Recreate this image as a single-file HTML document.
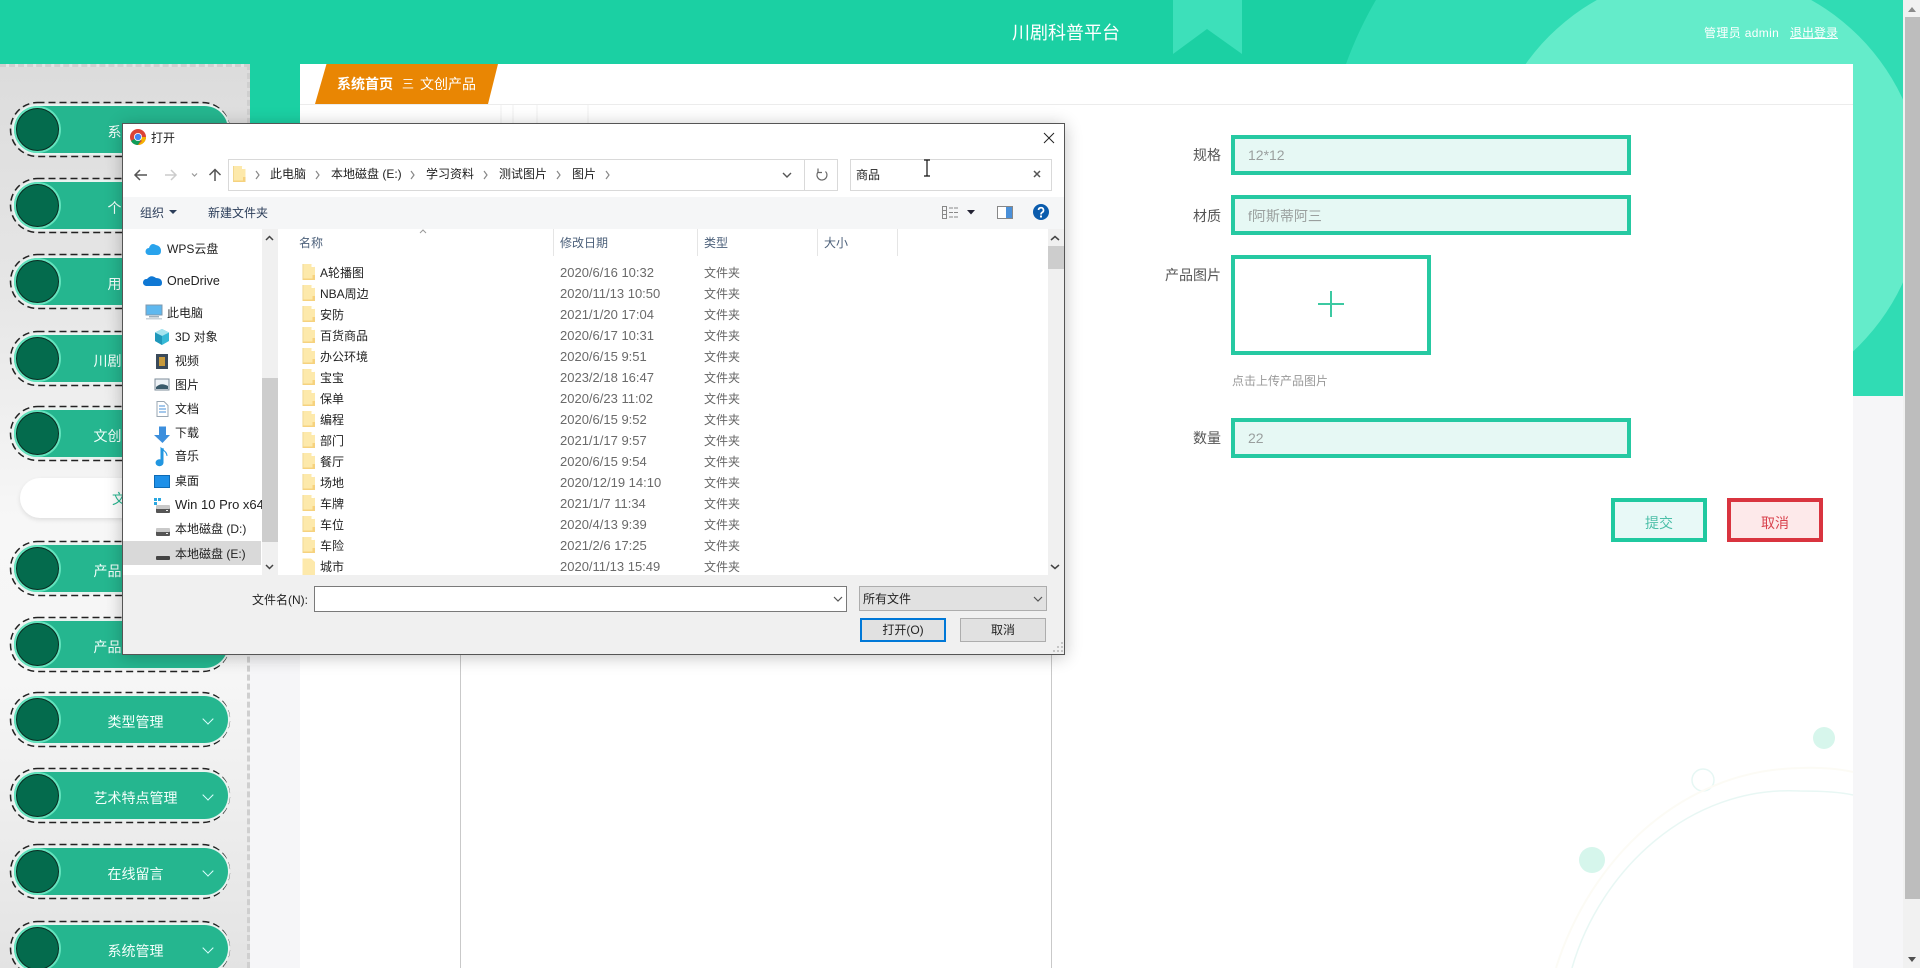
<!DOCTYPE html>
<html lang="zh-CN"><head><meta charset="utf-8"><title>川剧科普平台</title>
<style>
html,body{margin:0;padding:0;width:1920px;height:968px;overflow:hidden;background:#f6f6f8;font-family:"Liberation Sans","Noto Sans CJK SC",sans-serif}
#root{position:absolute;left:0;top:0;width:1920px;height:968px;overflow:hidden;filter:blur(.3px)}
div,span{position:absolute;box-sizing:border-box}
.t{white-space:nowrap;line-height:20px;height:20px}
#band{left:0;top:0;width:1920px;height:396px;background:#1bd0a3;overflow:hidden}
#side{left:0;top:64px;width:250px;height:904px;background:linear-gradient(180deg,#dcdcdc 0,#e6e6e6 25%,#f7f7f7 50%,#f6f6f6 68%,#e3e3e3 100%);border-top:3px dashed #cfcfcf;border-right:3px dashed #cfcfcf}
.pl{left:14px;width:214px;height:47px;background:#25b68f;border-radius:24px;box-shadow:0 0 0 2px #e9f3f0;color:#f4fffb;font-size:14px}
.ci{left:2px;top:2px;width:43px;height:43px;border-radius:50%;background:#046b4d;border:1px solid #0a2a20;box-shadow:0 0 0 2px #62e3bd}
.pl .t{left:0;width:243px;text-align:center;top:16px}
.ch{left:190px;top:19px;width:8px;height:8px;border-right:1.5px solid #dff;border-bottom:1.5px solid #dff;transform:rotate(45deg)}
#main{left:300px;top:64px;width:1553px;height:904px;background:#fff}
.lb{font-size:14px;color:#555;text-align:right;left:1100px;width:121px}
.ip{left:1231px;width:400px;height:40px;border:4px solid #26c9a2;background:#e6f8f4}
.iv{left:1248px;font-size:14px;color:#9a9f9e}
#dlg{left:122px;top:123px;width:943px;height:532px;background:#fff;border:1px solid #555;box-shadow:0 2px 16px rgba(0,0,0,.24)}
.d{font-size:12px;color:#222}
.n{left:320px;margin-top:1px}.dt{left:560px;font-size:13px;color:#6a6a6a;margin-top:1px}.ty{left:704px;color:#666;margin-top:1px}
.hd{top:233px;color:#4c607a}
.sep{top:229px;width:1px;height:27px;background:#e5e5e5}
</style></head><body><div id="root">

<div id="band">
<svg width="1920" height="396" style="position:absolute;left:0;top:0">
<path d="M1173 0H1242V54L1207 29L1173 54Z" fill="#3de0ba"/>
<circle cx="1720" cy="200" r="398" fill="#30dcb4"/>
<circle cx="1704" cy="191" r="219" fill="#64ecca"/>
</svg>
</div>
<span class="t" style="left:1012px;top:23px;font-size:18px;color:#fff">川剧科普平台</span>
<span class="t" style="left:1704px;top:23px;font-size:12px;letter-spacing:.35px;color:#fff">管理员 admin</span>
<span class="t" style="left:1790px;top:23px;font-size:12px;color:#fff;text-decoration:underline">退出登录</span>

<div id="side"></div>
<svg width="240" height="968" style="position:absolute;left:0;top:0">
<g fill="none" stroke="#222" stroke-width="1.500" stroke-dasharray="7 4">
<rect x="10.500" y="102.500" width="219" height="54" rx="27"/>
<rect x="10.500" y="178.500" width="219" height="54" rx="27"/>
<rect x="10.500" y="254.500" width="219" height="54" rx="27"/>
<rect x="10.500" y="331.500" width="219" height="54" rx="27"/>
<rect x="10.500" y="406.500" width="219" height="54" rx="27"/>
<rect x="10.500" y="541.500" width="219" height="54" rx="27"/>
<rect x="10.500" y="617.500" width="219" height="54" rx="27"/>
<rect x="10.500" y="692.500" width="219" height="54" rx="27"/>
<rect x="10.500" y="768.500" width="219" height="54" rx="27"/>
<rect x="10.500" y="844.500" width="219" height="54" rx="27"/>
<rect x="10.500" y="921.500" width="219" height="54" rx="27"/>
</g></svg>
<div class="pl" style="top:106px"><div class="ci"></div><span class="t">系统首页</span></div>
<div class="pl" style="top:182px"><div class="ci"></div><span class="t">个人中心</span></div>
<div class="pl" style="top:258px"><div class="ci"></div><span class="t">用户管理</span></div>
<div class="pl" style="top:335px"><div class="ci"></div><span class="t">川剧知识管理</span></div>
<div class="pl" style="top:410px"><div class="ci"></div><span class="t">文创产品管理</span></div>
<div style="left:20px;top:478px;width:210px;height:40px;border-radius:20px;background:#fff;box-shadow:0 2px 5px rgba(0,0,0,.1)"></div>
<span class="t" style="left:112px;top:489px;font-size:14px;color:#25b68f">文创产品</span>
<div class="pl" style="top:545px"><div class="ci"></div><span class="t">产品订单管理</span></div>
<div class="pl" style="top:621px"><div class="ci"></div><span class="t">产品评价管理</span><div class="ch"></div></div>
<div class="pl" style="top:696px"><div class="ci"></div><span class="t">类型管理</span><div class="ch"></div></div>
<div class="pl" style="top:772px"><div class="ci"></div><span class="t">艺术特点管理</span><div class="ch"></div></div>
<div class="pl" style="top:848px"><div class="ci"></div><span class="t">在线留言</span><div class="ch"></div></div>
<div class="pl" style="top:925px"><div class="ci"></div><span class="t">系统管理</span><div class="ch"></div></div>

<div id="main"></div>
<div style="left:300px;top:104px;width:1553px;height:1px;background:#ececec"></div>
<svg width="1920" height="968" style="position:absolute;left:0;top:0">
<path d="M326.500 64H498L488 104H315Z" fill="#e98603"/>
<path d="M501 105V125M513 105V125M537 105V125M588 105V125" stroke="#f0f0f0" fill="none"/>
<path d="M460.500 640V968M1051.500 640V968" stroke="#c9c9c9" fill="none"/>
<circle cx="1824" cy="738" r="11" fill="#d7f6ec"/>
<circle cx="1592" cy="860" r="13" fill="#d6f6ec"/>
<circle cx="1703" cy="780" r="11" fill="none" stroke="#e6f7f4" stroke-width="1.500"/>
<path d="M1572 968C1600 870 1690 785 1800 791C1820 791 1840 792 1853 795" fill="none" stroke="#e8f7f4" stroke-width="1.500"/>
<path d="M1556 968C1590 860 1680 770 1800 768C1820 767 1840 769 1853 772" fill="none" stroke="#fcfbf5" stroke-width="2"/>
</svg>
<span class="t" style="left:337px;top:74px;font-size:14px;font-weight:bold;color:#fff">系统首页</span>
<span class="t" style="left:402px;top:74px;font-size:12px;color:#fff">三</span>
<span class="t" style="left:420px;top:74px;font-size:14px;color:#fff">文创产品</span>

<span class="t lb" style="top:145px">规格</span>
<div class="ip" style="top:135px"></div><span class="t iv" style="top:145px">12*12</span>
<span class="t lb" style="top:206px">材质</span>
<div class="ip" style="top:195px"></div><span class="t iv" style="top:206px">f阿斯蒂阿三</span>
<span class="t lb" style="top:265px">产品图片</span>
<div style="left:1231px;top:255px;width:200px;height:100px;border:4px solid #26c9a2;background:#fff"></div>
<div style="left:1318px;top:303px;width:26px;height:2px;background:#3cc9a2"></div>
<div style="left:1330px;top:291px;width:2px;height:26px;background:#3cc9a2"></div>
<span class="t" style="left:1232px;top:371px;font-size:12px;color:#999">点击上传产品图片</span>
<span class="t lb" style="top:428px">数量</span>
<div class="ip" style="top:418px"></div><span class="t iv" style="top:428px">22</span>
<div style="left:1611px;top:498px;width:96px;height:44px;border:4px solid #20c9a0;background:#e8f9f7"></div>
<span class="t" style="left:1611px;width:96px;text-align:center;top:513px;font-size:14px;color:#4cbfa8">提交</span>
<div style="left:1727px;top:498px;width:96px;height:44px;border:4px solid #d9343f;background:#fde9ea"></div>
<span class="t" style="left:1727px;width:96px;text-align:center;top:513px;font-size:14px;color:#d9434e">取消</span>

<div style="left:1903px;top:0;width:17px;height:968px;background:#f1f1f1"></div>
<div style="left:1905px;top:17px;width:15px;height:882px;background:#bdbdbd"></div>
<svg width="17" height="968" style="position:absolute;left:1903px;top:0"><path d="M5 12L9 7L13 12Z" fill="#8a8a8a"/><path d="M5 957L9 962L13 957Z" fill="#505050"/></svg>

<div id="dlg"></div>
<div style="left:123px;top:197px;width:941px;height:32px;background:#f5f6f7"></div>
<div style="left:262px;top:229px;width:16px;height:346px;background:#f0f0f0"></div>
<div style="left:262px;top:378px;width:16px;height:164px;background:#cdcdcd"></div>
<div style="left:123px;top:541px;width:138px;height:24px;background:#d9d9d9"></div>
<div style="left:1048px;top:229px;width:16px;height:346px;background:#f0f0f0"></div>
<div style="left:1048px;top:246px;width:16px;height:23px;background:#cdcdcd"></div>
<div style="left:123px;top:575px;width:941px;height:79px;background:#f0f0f0"></div>
<div style="left:228px;top:159px;width:610px;height:32px;border:1px solid #d9d9d9;background:#fff"></div>
<div style="left:804px;top:159px;width:1px;height:32px;background:#d9d9d9"></div>
<div style="left:850px;top:159px;width:202px;height:32px;border:1px solid #d9d9d9;background:#fff"></div>
<div class="sep" style="left:553px"></div><div class="sep" style="left:697px"></div><div class="sep" style="left:817px"></div><div class="sep" style="left:897px"></div>
<div style="left:314px;top:586px;width:533px;height:26px;border:1px solid #7a7a7a;background:#fff"></div>
<div style="left:859px;top:586px;width:188px;height:25px;border:1px solid #adadad;background:#e1e1e1"></div>
<div style="left:860px;top:618px;width:86px;height:24px;border:2px solid #0078d7;background:#e1e1e1"></div>
<div style="left:960px;top:618px;width:86px;height:24px;border:1px solid #adadad;background:#e1e1e1"></div>

<span class="t d" style="left:151px;top:128px">打开</span>
<span class="t d" style="left:270px;top:164px">此电脑</span>
<span class="t d" style="left:331px;top:164px">本地磁盘 (E:)</span>
<span class="t d" style="left:426px;top:164px">学习资料</span>
<span class="t d" style="left:499px;top:164px">测试图片</span>
<span class="t d" style="left:572px;top:164px">图片</span>
<span class="t d" style="left:856px;top:165px">商品</span>
<span class="t d" style="left:140px;top:203px;color:#2c3e5a">组织</span>
<span class="t d" style="left:208px;top:203px;color:#2c3e5a">新建文件夹</span>

<span class="t d" style="left:167px;top:239px">WPS云盘</span>
<span class="t d" style="left:167px;top:271px;font-size:12.500px">OneDrive</span>
<span class="t d" style="left:167px;top:303px">此电脑</span>
<span class="t d" style="left:175px;top:327px">3D 对象</span>
<span class="t d" style="left:175px;top:351px">视频</span>
<span class="t d" style="left:175px;top:375px">图片</span>
<span class="t d" style="left:175px;top:399px">文档</span>
<span class="t d" style="left:175px;top:423px">下载</span>
<span class="t d" style="left:175px;top:446px">音乐</span>
<span class="t d" style="left:175px;top:471px">桌面</span>
<div style="left:175px;top:495px;width:87px;height:20px;overflow:hidden"><span class="t d" style="left:0;top:0;font-size:13px">Win 10 Pro x64</span></div>
<span class="t d" style="left:175px;top:519px">本地磁盘 (D:)</span>
<span class="t d" style="left:175px;top:544px">本地磁盘 (E:)</span>

<span class="t d hd" style="left:299px">名称</span>
<span class="t d hd" style="left:560px">修改日期</span>
<span class="t d hd" style="left:704px">类型</span>
<span class="t d hd" style="left:824px">大小</span>

<span class="t d n" style="top:262px">A轮播图</span><span class="t d dt" style="top:262px">2020/6/16 10:32</span><span class="t d ty" style="top:262px">文件夹</span>
<span class="t d n" style="top:283px">NBA周边</span><span class="t d dt" style="top:283px">2020/11/13 10:50</span><span class="t d ty" style="top:283px">文件夹</span>
<span class="t d n" style="top:304px">安防</span><span class="t d dt" style="top:304px">2021/1/20 17:04</span><span class="t d ty" style="top:304px">文件夹</span>
<span class="t d n" style="top:325px">百货商品</span><span class="t d dt" style="top:325px">2020/6/17 10:31</span><span class="t d ty" style="top:325px">文件夹</span>
<span class="t d n" style="top:346px">办公环境</span><span class="t d dt" style="top:346px">2020/6/15 9:51</span><span class="t d ty" style="top:346px">文件夹</span>
<span class="t d n" style="top:367px">宝宝</span><span class="t d dt" style="top:367px">2023/2/18 16:47</span><span class="t d ty" style="top:367px">文件夹</span>
<span class="t d n" style="top:388px">保单</span><span class="t d dt" style="top:388px">2020/6/23 11:02</span><span class="t d ty" style="top:388px">文件夹</span>
<span class="t d n" style="top:409px">编程</span><span class="t d dt" style="top:409px">2020/6/15 9:52</span><span class="t d ty" style="top:409px">文件夹</span>
<span class="t d n" style="top:430px">部门</span><span class="t d dt" style="top:430px">2021/1/17 9:57</span><span class="t d ty" style="top:430px">文件夹</span>
<span class="t d n" style="top:451px">餐厅</span><span class="t d dt" style="top:451px">2020/6/15 9:54</span><span class="t d ty" style="top:451px">文件夹</span>
<span class="t d n" style="top:472px">场地</span><span class="t d dt" style="top:472px">2020/12/19 14:10</span><span class="t d ty" style="top:472px">文件夹</span>
<span class="t d n" style="top:493px">车牌</span><span class="t d dt" style="top:493px">2021/1/7 11:34</span><span class="t d ty" style="top:493px">文件夹</span>
<span class="t d n" style="top:514px">车位</span><span class="t d dt" style="top:514px">2020/4/13 9:39</span><span class="t d ty" style="top:514px">文件夹</span>
<span class="t d n" style="top:535px">车险</span><span class="t d dt" style="top:535px">2021/2/6 17:25</span><span class="t d ty" style="top:535px">文件夹</span>
<div style="left:300px;top:547px;width:740px;height:28px;overflow:hidden"><span class="t d" style="left:20px;top:10px">城市</span><span class="t d" style="left:260px;top:10px;font-size:13px;color:#6a6a6a">2020/11/13 15:49</span><span class="t d" style="left:404px;top:10px;color:#666">文件夹</span></div>

<span class="t d" style="left:252px;top:590px">文件名(N):</span>
<span class="t d" style="left:863px;top:589px">所有文件</span>
<span class="t d" style="left:860px;width:86px;text-align:center;top:620px">打开(O)</span>
<span class="t d" style="left:960px;width:86px;text-align:center;top:620px">取消</span>

<svg width="1920" height="968" style="position:absolute;left:0;top:0;pointer-events:none">
<defs>
<g id="f"><path d="M0-8H9L12.500-5V8H0Z" fill="#fde9ab"/><path d="M9-8L12.500-5H9Z" fill="#fff"/><path d="M0 6.500H12.500V8H0ZM10 3H12.500V8H10Z" fill="#f6d27e"/><path d="M0-8H.8V8H0Z" fill="#efd48a"/></g>
<g id="dk"><rect width="14" height="5" rx="1" fill="#555"/><rect y="-3" width="14" height="4" rx="1" fill="#c9c9c9"/><rect x="10" y="2" width="2" height="1" fill="#eee"/></g>
</defs>
<!-- chrome -->
<circle cx="138" cy="137" r="8" fill="#db4437"/><path d="M138 137L131 141A8 8 0 0 0 138 145L142 138Z" fill="#0f9d58"/><path d="M138 145A8 8 0 0 0 146 137H138L142 141Z" fill="#f4b400"/><circle cx="138" cy="137" r="4" fill="#fff"/><circle cx="138" cy="137" r="3.200" fill="#4285f4"/>
<path d="M1044 133L1054 143M1054 133L1044 143" stroke="#222" fill="none"/>
<!-- nav -->
<path d="M147 175H135M140 170L135 175L140 180" stroke="#555" stroke-width="1.500" fill="none"/>
<path d="M165 175H176M171 170L176 175L171 180" stroke="#ccc" stroke-width="1.500" fill="none"/>
<path d="M192 173.500L194.500 176L197 173.500" stroke="#999" stroke-width="1.200" fill="none"/>
<path d="M215 181V169M209.500 175L215 169.500L220.500 175" stroke="#555" stroke-width="1.500" fill="none"/>
<use href="#f" x="233" y="174"/>
<path d="M256 171L259 175L256 179M316 171L319 175L316 179M411 171L414 175L411 179M484 171L487 175L484 179M557 171L560 175L557 179M606 171L609 175L606 179" stroke="#888" stroke-width="1.200" fill="none"/>
<path d="M783 173L787 177L791 173" stroke="#555" stroke-width="1.400" fill="none"/>
<path d="M825.500 171.500A5 5 0 1 1 818 172M818 168.500V172.500H822" stroke="#666" stroke-width="1.200" fill="none"/>
<path d="M1034 171L1040 177M1040 171L1034 177" stroke="#555" stroke-width="1.500" fill="none"/>
<path d="M927 160V176M924 160H930M924 176H930" stroke="#111" stroke-width="1.200" fill="none"/>
<!-- toolbar -->
<path d="M169 210H177L173 214Z" fill="#2c3e5a"/>
<g fill="none" stroke="#888"><rect x="942.500" y="206.500" width="4" height="4"/><rect x="942.500" y="210.500" width="4" height="4"/><rect x="942.500" y="214.500" width="4" height="4"/><path d="M949 208H958M949 212.500H958M949 217H958" stroke-dasharray="4 1"/></g>
<path d="M967 210H975L971 214.500Z" fill="#223"/>
<rect x="997.500" y="206.500" width="15" height="12" fill="#fff" stroke="#888"/><rect x="1006" y="207" width="6" height="11" fill="#4a90d9"/>
<circle cx="1041" cy="212" r="8" fill="#0b5cad"/>
<path d="M1038.500 210A2.500 2.500 0 1 1 1042 212.500Q1041 213.200 1041 214.500" stroke="#fff" stroke-width="1.700" fill="none"/><rect x="1040" y="215.500" width="2" height="2" fill="#fff"/>
<!-- scroll arrows -->
<path d="M266 240L269.500 236.500L273 240M1051 240L1055 236.500L1059 240M266 565L269.500 568.500L273 565M1051 565L1055 568.500L1059 565" stroke="#444" stroke-width="1.500" fill="none"/>
<path d="M420 233L423 230L426 233" stroke="#999" fill="none"/>
<!-- nav pane icons -->
<path d="M149 255A3.500 3.500 0 0 1 149 248Q151 242 156 245Q161 246 161 251Q161 255 157 255Z" fill="#29a3ec"/>
<path d="M146 286A3.500 3.500 0 0 1 147 279Q151 274 156 278Q162 278 162 283Q162 286 159 286Z" fill="#0f78d4"/>
<rect x="146" y="305" width="16" height="10" fill="#5fb8ef" stroke="#7f98ad"/><rect x="149" y="316" width="10" height="1.500" fill="#9fb0bd"/><rect x="146" y="318" width="16" height="1.500" fill="#c9d2d9"/>
<path d="M162 329L169 332.500V341L162 345L155 341V332.500Z" fill="#35b9d6"/><path d="M162 329L169 332.500L162 336L155 332.500Z" fill="#a5e4ef"/><path d="M155 332.500L162 336V345L155 341Z" fill="#1f97ba"/>
<rect x="156" y="354" width="12" height="15" fill="#3a4a5a"/><rect x="159" y="357" width="6" height="9" fill="#c79a3c"/>
<rect x="155" y="379" width="14" height="11" fill="#eef2f6" stroke="#7d8c99"/><path d="M156 387Q161 382 168 386V389H156Z" fill="#3a5a6a"/>
<path d="M157 401.500H164L168 405.500V416.500H157Z" fill="#fff" stroke="#9aa7b3"/><path d="M159 406H165M159 409H166M159 412H166" stroke="#4a90d9"/>
<path d="M159 426.500H166V435H170L162.500 443L154 435H159Z" fill="#3c8fdd"/>
<path d="M163 448V463A3.500 3 0 1 1 161 460V448C164 451 167 452 167 456" fill="#2196e0" stroke="#2196e0"/>
<rect x="154.500" y="475.500" width="15" height="12" fill="#1e90e8" stroke="#0e6bb5"/>
<rect x="154" y="498" width="3" height="3" fill="#2aa7e0"/><rect x="158" y="498" width="3" height="3" fill="#2aa7e0"/><rect x="154" y="502" width="3" height="3" fill="#2aa7e0"/>
<use href="#dk" x="156" y="508"/>
<use href="#dk" x="156" y="531"/>
<rect x="156" y="556" width="14" height="4" rx="1" fill="#444"/>
<path d="M834 597L838 601L842 597M1034 597L1038 601L1042 597" stroke="#555" stroke-width="1.200" fill="none"/>
<path d="M1061 652h2v-2h-2zM1057 652h2v-2h-2zM1053 652h2v-2h-2zM1061 648h2v-2h-2zM1057 648h2v-2h-2zM1061 644h2v-2h-2z" fill="#c5c5c5"/>
<!-- list folders -->
<use href="#f" x="302.500" y="272"/><use href="#f" x="302.500" y="293"/><use href="#f" x="302.500" y="314"/><use href="#f" x="302.500" y="335"/><use href="#f" x="302.500" y="356"/><use href="#f" x="302.500" y="377"/><use href="#f" x="302.500" y="398"/><use href="#f" x="302.500" y="419"/><use href="#f" x="302.500" y="440"/><use href="#f" x="302.500" y="461"/><use href="#f" x="302.500" y="482"/><use href="#f" x="302.500" y="503"/><use href="#f" x="302.500" y="524"/><use href="#f" x="302.500" y="545"/>
<path d="M302.500 558.500H311L315 562V575H302.500Z" fill="#fde9ab"/>
</svg>
</div></body></html>
